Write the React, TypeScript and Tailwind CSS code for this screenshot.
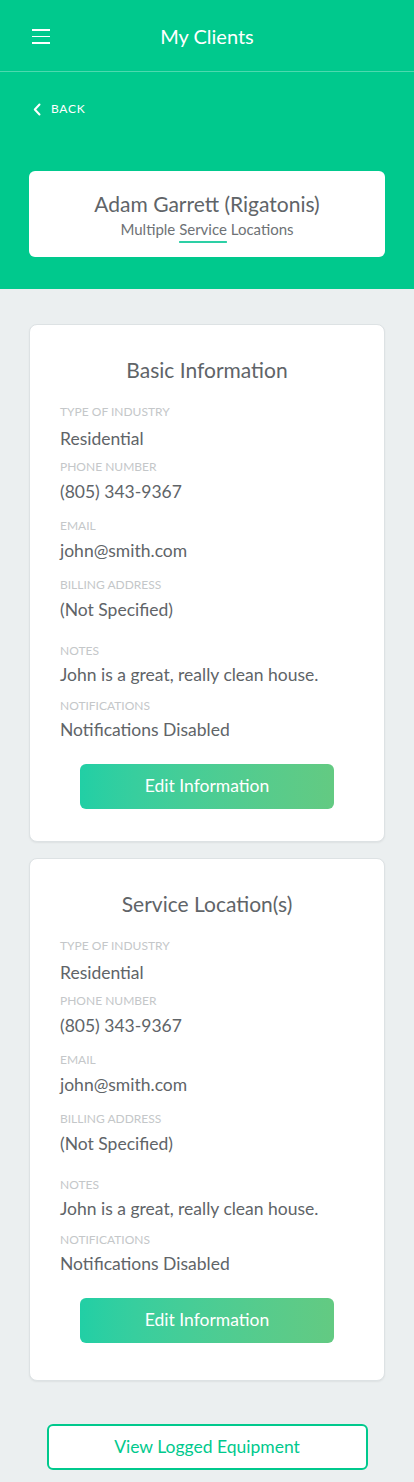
import React from 'react';

/* ── Data ── */
type Field = { label: string; value: string; lt: string; vt: string };

const FIELDS: Field[] = [
  { label: 'Type of Industry', value: 'Residential', lt: 'mt-[22px]', vt: 'mt-[7px]' },
  { label: 'Phone Number', value: '(805) 343-9367', lt: 'mt-[8px]', vt: 'mt-[5px]' },
  { label: 'Email', value: 'john@smith.com', lt: 'mt-[14px]', vt: 'mt-[5px]' },
  { label: 'Billing Address', value: '(Not Specified)', lt: 'mt-[14px]', vt: 'mt-[5px]' },
  { label: 'Notes', value: 'John is a great, really clean house.', lt: 'mt-[21px]', vt: 'mt-[4px]' },
  { label: 'Notifications', value: 'Notifications Disabled', lt: 'mt-[11px]', vt: 'mt-[4px]' },
];

function InfoCard({ title, bottom }: { title: string; bottom: string }) {
  return (
    <div className={`bg-white rounded-lg border border-[#dde2e4] shadow-[0_1px_2px_rgba(0,0,0,0.06)] pt-[33px] px-[30px] ${bottom}`}>
      <h2 className="text-center text-[21px] leading-[24px] text-[#606468]">{title}</h2>
      {FIELDS.map((f) => (
        <div key={f.label}>
          <p className={`${f.lt} text-[12px] leading-[16px] uppercase text-[#c4c7c9]`}>{f.label}</p>
          <p className={`${f.vt} text-[17.5px] leading-[24px] text-[#606468]`}>{f.value}</p>
        </div>
      ))}
      <button className="mt-[22px] mx-auto flex items-center justify-center w-[254px] h-[45px] rounded-md bg-gradient-to-r from-[#21cfa5] to-[#63ca82] text-white text-[17.5px]">
        Edit Information
      </button>
    </div>
  );
}

export default function App() {
  return (
    <div className="min-h-[1482px] bg-[#ebeff0]" style={{ fontFamily: 'Lato, "Noto Sans", sans-serif' }}>
      {/* ── Green top ── */}
      <div className="bg-[#00c98d] pb-[32px]">
        <div className="relative h-[72px] border-b border-white/30 flex items-center justify-center">
          <div className="absolute left-[32px] top-[29px] flex flex-col gap-[5px]">
            <span className="block w-[18px] h-[1.5px] bg-white" />
            <span className="block w-[18px] h-[1.5px] bg-white" />
            <span className="block w-[18px] h-[1.5px] bg-white" />
          </div>
          <h1 className="text-white text-[20px] leading-none">My Clients</h1>
        </div>

        <div className="mt-[29px] ml-[33px] flex items-center gap-[10px] text-white h-[16px]">
          <svg width="8" height="13" viewBox="0 0 8 13" fill="none">
            <path d="M6.5 1.5L1.8 6.5L6.5 11.5" stroke="white" strokeWidth="2" strokeLinecap="round" strokeLinejoin="round" />
          </svg>
          <span className="text-[12px] tracking-[0.06em] uppercase">Back</span>
        </div>

        <div className="mt-[54px] mx-[29px] bg-white rounded-md pt-[20px] pb-[18px] text-center">
          <p className="text-[21px] leading-[26px] text-[#606468]">Adam Garrett (Rigatonis)</p>
          <p className="mt-[2px] text-[15px] leading-[20px] text-[#6e7276]">
            Multiple{' '}
            <span className="underline decoration-2 underline-offset-[6px] decoration-[#2dcfa5]">Service</span>{' '}
            Locations
          </p>
        </div>
      </div>

      {/* ── Cards ── */}
      <div className="px-[29px] pt-[35px] flex flex-col gap-[16px]">
        <InfoCard title="Basic Information" bottom="pb-[32px]" />
        <InfoCard title="Service Location(s)" bottom="pb-[37px]" />
      </div>

      <div className="mt-[43px] pb-[13px] flex justify-center">
        <button className="w-[321px] h-[46px] rounded-md border-2 border-[#00c98d] bg-white text-[#00c98d] text-[17.5px]">
          View Logged Equipment
        </button>
      </div>
    </div>
  );
}
